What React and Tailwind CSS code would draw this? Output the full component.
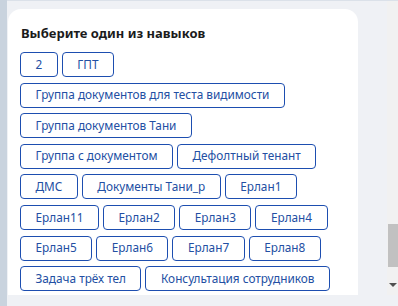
import React from 'react';

const rows = [
  ['2', 'ГПТ'],
  ['Группа документов для теста видимости'],
  ['Группа документов Тани'],
  ['Группа с документом', 'Дефолтный тенант'],
  ['ДМС', 'Документы Тани_р', 'Ерлан1'],
  ['Ерлан11', 'Ерлан2', 'Ерлан3', 'Ерлан4'],
  ['Ерлан5', 'Ерлан6', 'Ерлан7', 'Ерлан8'],
  ['Задача трёх тел', 'Консультация сотрудников'],
];

const SkillButton = ({ label }) => (
  <button className="h-[25px] px-[14.5px] rounded-[4px] border border-[#1d4eb0] bg-white text-[11.8px] leading-none text-[#234fa3] whitespace-nowrap">
    {label}
  </button>
);

export default function App() {
  return (
    <div
      className="w-[398px] h-[306px] flex bg-[#eff1f5] overflow-hidden"
      style={{ fontFamily: '"Noto Sans", "Open Sans", sans-serif' }}
    >
      {/* left strip */}
      <div className="w-[7px] h-full bg-[#c9d3de]" />

      <div className="flex-1 flex flex-col">
        <div className="h-[1px] bg-[#dbe1e9]" />
        <div className="flex h-[294px]">
          {/* scroll area */}
          <div className="flex-1 pl-[1px] pt-[8px]">
            <div className="w-[350px] h-full bg-white rounded-t-[13px] px-[12px] pt-[15px]">
              <h2 className="pl-[1px] text-[13px] font-bold leading-[18px] text-[#1b1b1b]">
                Выберите один из навыков
              </h2>
              <div className="mt-[10px] flex flex-col gap-y-[5.6px]">
                {rows.map((row, i) => (
                  <div key={i} className="flex gap-x-[4px]">
                    {row.map((label) => (
                      <SkillButton key={label} label={label} />
                    ))}
                  </div>
                ))}
              </div>
            </div>
          </div>

          {/* scrollbar */}
          <div className="w-[11px] h-full bg-[#f1f1f1] flex flex-col items-end">
            <div className="mt-[223px] w-[10px] h-[43px] bg-[#c1c1c1]" />
            <div className="mt-auto mb-[8px] mr-[1px] w-0 h-0 border-l-[4px] border-r-[4px] border-t-[4px] border-l-transparent border-r-transparent border-t-[#505050]" />
          </div>
        </div>
      </div>
    </div>
  );
}
